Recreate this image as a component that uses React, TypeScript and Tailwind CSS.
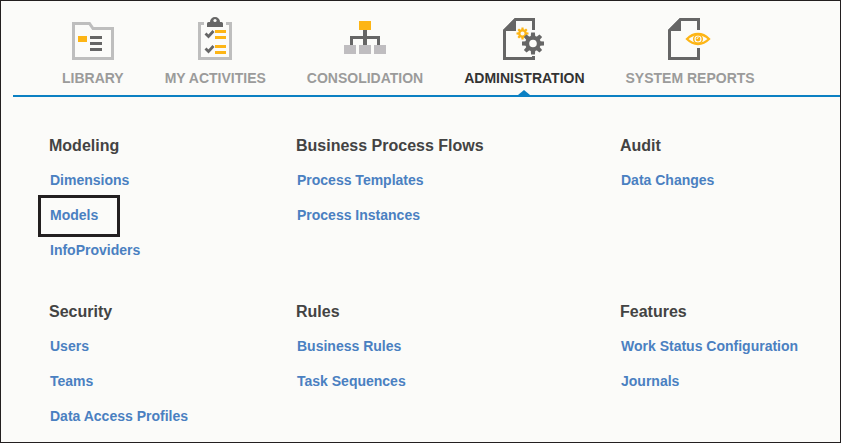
import React, { useState } from 'react';
import clsx from 'clsx';

const DARK = '#666666';
const LIGHT = '#bebebe';
const YELLOW = '#fdb515';

function LibraryIcon() {
  return (
    <svg width="44" height="48" viewBox="0 0 44 48" fill="none" aria-hidden="true">
      <path d="M2.5 9.5H18.5L22 14.5H41.5V44.5H2.5Z" stroke={LIGHT} strokeWidth="3" />
      <path d="M7 22h9v6H7z" fill={YELLOW} />
      <path d="M19 22h12v3H19zM19 28h12v3H19zM19 34h12v3H19z" fill={DARK} />
    </svg>
  );
}

function ActivitiesIcon() {
  return (
    <svg width="44" height="48" viewBox="0 0 44 48" fill="none" aria-hidden="true">
      <path d="M11 9.5H6.5V44.5H37.5V9.5H33" stroke={LIGHT} strokeWidth="3" />
      <path d="M14 13V9.5Q14 8 15.5 8H17a5 5 0 0 1 10 0H28.5Q30 8 30 9.5V13Z" fill={DARK} />
      <circle cx="22" cy="6.5" r="1.6" fill="#fbfbf9" />
      <path d="M12.5 19.5L15.5 22.5L20.5 17M12.5 34.5L15.5 37.5L20.5 32" stroke={DARK} strokeWidth="2.8" />
      <path d="M22 16h11v3H22zM22 22h11v3H22zM22 31h11v3H22zM22 37h11v3H22z" fill={YELLOW} />
    </svg>
  );
}

function ConsolidationIcon() {
  return (
    <svg width="44" height="48" viewBox="0 0 44 48" fill="none" aria-hidden="true">
      <path d="M20 16h4v15h-4zM7 22h30v3H7zM7 22h3v9H7zM34 22h3v9h-3z" fill={DARK} />
      <path d="M16 7h12v9H16z" fill={YELLOW} />
      <path d="M1 31h12v9H1zM16 31h12v9H16zM31 31h12v9H31z" fill="#bfbdc0" />
    </svg>
  );
}

type GearProps = { cx: number; cy: number; size: number; color: string };

// Drawn with a radius of 11 and scaled to the wanted size
function Gear({ cx, cy, size, color }: GearProps) {
  return (
    <g transform={`translate(${cx} ${cy}) scale(${size / 11})`}>
      {[0, 45, 90, 135, 180, 225, 270, 315].map((angle) => (
        <path key={angle} d="M-2.3 -6.5L-1.9 -11H1.9L2.3 -6.5Z" fill={color} transform={`rotate(${angle})`} />
      ))}
      <circle r="5.8" stroke={color} strokeWidth="4" fill="none" />
    </g>
  );
}

function AdministrationIcon() {
  return (
    <svg width="44" height="48" viewBox="0 0 44 48" fill="none" aria-hidden="true">
      <path d="M31.5 16V5.5H13.5L2.5 16.5V44.5H31.5V42" stroke={DARK} strokeWidth="3" />
      <path d="M1 17V16L13 4H14V17Z" fill={DARK} />
      <Gear cx={20.5} cy={19.5} size={6} color={YELLOW} />
      <Gear cx={31} cy={29.5} size={11} color={DARK} />
    </svg>
  );
}

function ReportsIcon() {
  return (
    <svg width="44" height="48" viewBox="0 0 44 48" fill="none" aria-hidden="true">
      <path d="M30.5 16V5.5H12.5L1.5 16.5V44.5H30.5V34" stroke={DARK} strokeWidth="3" />
      <path d="M0 17V16L12 4H13V17Z" fill={DARK} />
      <path d="M19 25Q24 20 30 20T41 25Q36 30 30 30T19 25Z" stroke={YELLOW} strokeWidth="2.3" />
      <circle cx="30" cy="25" r="4.3" stroke={YELLOW} strokeWidth="1.5" />
      <circle cx="30" cy="25" r="2.4" fill={YELLOW} />
      <path d="M29 25a1.5 1.5 0 0 1 1.5 -1.5" stroke="#fbfbf9" />
    </svg>
  );
}

const tabs = [
  { label: 'LIBRARY', icon: LibraryIcon },
  { label: 'MY ACTIVITIES', icon: ActivitiesIcon },
  { label: 'CONSOLIDATION', icon: ConsolidationIcon },
  { label: 'ADMINISTRATION', icon: AdministrationIcon },
  { label: 'SYSTEM REPORTS', icon: ReportsIcon },
];

const sections = [
  { title: 'Modeling', links: ['Dimensions', 'Models', 'InfoProviders'] },
  { title: 'Business Process Flows', links: ['Process Templates', 'Process Instances'] },
  { title: 'Audit', links: ['Data Changes'] },
  { title: 'Security', links: ['Users', 'Teams', 'Data Access Profiles'] },
  { title: 'Rules', links: ['Business Rules', 'Task Sequences'] },
  { title: 'Features', links: ['Work Status Configuration', 'Journals'] },
];

export default function App() {
  const [activeTab, setActiveTab] = useState('ADMINISTRATION');

  return (
    <div className="min-h-screen border border-[#231f20] bg-[#fbfbf9] font-['Liberation_Sans',Arial,sans-serif] font-bold">
      {/* Top navigation */}
      <nav className="ml-3 flex gap-[41px] border-b-2 border-[#0b80c3] pt-[13px] pl-[49px]">
        {tabs.map(({ label, icon: Icon }) => (
          <button
            key={label}
            type="button"
            onClick={() => setActiveTab(label)}
            className={clsx(
              'relative flex flex-col items-center gap-1.5 pb-[7px] text-sm whitespace-nowrap',
              activeTab === label ? 'text-[#333333]' : 'text-[#9b9b9b]'
            )}
          >
            <Icon />
            <span>{label}</span>
            {activeTab === label && (
              <svg className="absolute bottom-0 left-1/2 -translate-x-1/2" width="12" height="5" viewBox="0 0 12 5" aria-hidden="true">
                <path d="M0 5L6 0L12 5Z" fill="#0b80c3" />
              </svg>
            )}
          </button>
        ))}
      </nav>

      {/* Link sections */}
      <main className="grid grid-cols-[247fr_324fr_220fr] gap-y-[34px] pt-[39px] pb-2 pl-12">
        {sections.map((section) => (
          <section key={section.title}>
            <h2 className="text-base leading-5 text-[#434343]">{section.title}</h2>
            <ul className="mt-[7px] pl-px text-sm leading-[35px] text-[#4a80c1]">
              {section.links.map((link) => (
                <li key={link}>
                  <a href="#" className="relative inline-block hover:underline">
                    {link}
                    {link === 'Models' && (
                      <span className="absolute -top-[3px] -left-3 h-[42px] w-[82px] border-3 border-[#231f20]" />
                    )}
                  </a>
                </li>
              ))}
            </ul>
          </section>
        ))}
      </main>
    </div>
  );
}
